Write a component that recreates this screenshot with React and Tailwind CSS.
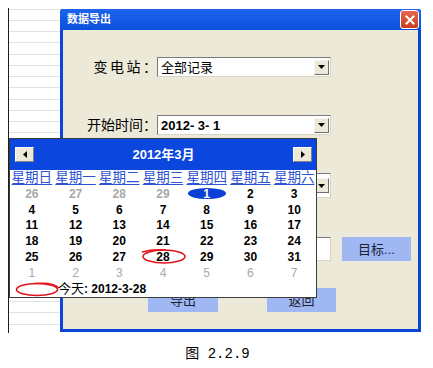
import React from "react";

function DropBtn() {
  return (
    <div className="w-[15px] h-[15px] bg-[#ece9d8] border border-t-[#f4f3ee] border-l-[#f4f3ee] border-r-[#6f6f6f] border-b-[#6f6f6f] flex items-center justify-center shrink-0">
      <svg width="7" height="4" viewBox="0 0 7 4">
        <path d="M0 0H7L3.5 4Z" fill="#000" />
      </svg>
    </div>
  );
}

function Combo({ children, tall }) {
  return (
    <div
      className={
        (tall ? "h-[25px] " : "h-[20px] ") +
        "w-[174px] bg-white border border-t-[#7a7a7a] border-l-[#7a7a7a] border-r-[#d8d5c8] border-b-[#d8d5c8] flex items-center justify-between pl-[3px] pr-[1px]"
      }
    >
      <div className="text-[13px] leading-none text-black whitespace-pre">{children}</div>
      <DropBtn />
    </div>
  );
}

function NavBtn({ dir }) {
  return (
    <div className="w-[19px] h-[15px] bg-[#ece9d8] border border-t-[#ffffff] border-l-[#ffffff] border-r-[#808080] border-b-[#808080] flex items-center justify-center">
      <svg width="4" height="7" viewBox="0 0 4 7">
        {dir === "left" ? (
          <path d="M4 0V7L0 3.5Z" fill="#000" />
        ) : (
          <path d="M0 0V7L4 3.5Z" fill="#000" />
        )}
      </svg>
    </div>
  );
}

const weeks = [
  [
    { d: 26, g: true },
    { d: 27, g: true },
    { d: 28, g: true },
    { d: 29, g: true },
    { d: 1, sel: true },
    { d: 2 },
    { d: 3 },
  ],
  [4, 5, 6, 7, 8, 9, 10].map((d) => ({ d })),
  [11, 12, 13, 14, 15, 16, 17].map((d) => ({ d })),
  [18, 19, 20, 21, 22, 23, 24].map((d) => ({ d })),
  [25, 26, 27, 28, 29, 30, 31].map((d) => ({ d })),
  [1, 2, 3, 4, 5, 6, 7].map((d) => ({ d, g: true, thin: true })),
];

const dayNames = ["星期日", "星期一", "星期二", "星期三", "星期四", "星期五", "星期六"];

function Calendar() {
  return (
    <div className="absolute left-[9px] top-[138px] w-[308px] border border-[#3c3c3c] bg-white flex flex-col">
      <div className="h-[31px] bg-[#0b46df] flex items-center justify-between pl-[5px] pr-[4px]">
        <NavBtn dir="left" />
        <div className="text-white font-bold text-[13px] leading-none">2012年3月</div>
        <NavBtn dir="right" />
      </div>
      <div className="h-[16px] grid grid-cols-7 items-center">
        {dayNames.map((n) => (
          <div key={n} className="h-[14px] text-center text-[13.5px] leading-[14px] text-[#2d52d2] underline underline-offset-[2px]">
            {n}
          </div>
        ))}
      </div>
      <div className="grid grid-cols-7">
        {weeks.map((w, i) =>
          w.map((c, j) => (
            <div key={i + "-" + j} className="h-[15.8px] relative flex items-center justify-center">
              {c.sel && <span className="absolute left-[3px] top-[2px] w-[38px] h-[11px] rounded-[50%] bg-[#0b3fd6]" />}
              <span
                className={
                  "relative text-[12px] leading-none " +
                  (c.sel
                    ? "text-white font-bold"
                    : c.g
                    ? c.thin
                      ? "text-[#a8a8a8]"
                      : "text-[#a8a8a8] font-bold"
                    : "text-black font-bold")
                }
              >
                {c.d}
              </span>
            </div>
          ))
        )}
      </div>
      <div className="h-[16px] flex items-center pl-[48px]">
        <span className="text-[13px] leading-none text-black">今天</span>
        <span className="text-[12px] leading-none font-bold text-black">: 2012-3-28</span>
      </div>
    </div>
  );
}

export default function App() {
  const lines = Array.from({ length: 29 }, (_, i) => i);
  return (
    <div className="relative w-[433px] h-[368px] bg-white overflow-hidden font-['Liberation_Sans','Noto_Sans_CJK_SC',sans-serif]">
      <div className="flex pl-[8px] pt-[8px]">
        {/* ruled sheet at left */}
        <div className="w-[52px] h-[325px] border-l border-[#1e1e1e] flex flex-col pt-[1px] overflow-hidden">
          {lines.map((i) => (
            <div
              key={i}
              className={(i % 4 === 3 ? "h-[12px]" : "h-[11px]") + " shrink-0 border-t border-[#e2e2e2]"}
            />
          ))}
        </div>
        {/* dialog window */}
        <div className="mt-[1px] w-[361px] h-[323px] flex flex-col">
          <div className="h-[21px] bg-gradient-to-b from-[#1d63ec] to-[#0a50dc] rounded-t-[2px] flex items-center justify-between pl-[7px] pr-[2px]">
            <span className="text-white font-bold text-[11px] leading-none">数据导出</span>
            <div className="w-[19px] h-[19px] rounded-[3px] border border-white bg-gradient-to-b from-[#e8674a] to-[#c83d1e] flex items-center justify-center">
              <svg width="10" height="10" viewBox="0 0 10 10">
                <path d="M1.5 1.5L8.5 8.5M8.5 1.5L1.5 8.5" stroke="#fff" strokeWidth="2" strokeLinecap="square" />
              </svg>
            </div>
          </div>
          <div className="flex-1 bg-[#ece9d8] border-l-[3px] border-r-[3px] border-b-[3px] border-[#0a45d8] flex flex-col">
            <div className="mt-[27px] flex items-center h-[20px]">
              <div className="w-[94px] text-right text-[14px] leading-none text-black">
                <span className="tracking-[2.5px]">变电站</span>：
              </div>
              <Combo>全部记录</Combo>
            </div>
            <div className="mt-[38px] flex items-center h-[20px]">
              <div className="w-[94px] text-right text-[14px] leading-none text-black">开始时间：</div>
              <Combo>
                <span className="font-bold">2012- 3- 1</span>
              </Combo>
            </div>
            {/* end-date combo, mostly hidden under the calendar popup */}
            <div className="mt-[38px] flex items-center h-[25px]">
              <div className="w-[94px]" />
              <Combo tall />
            </div>
            <div className="mt-[39px] flex items-center h-[24px]">
              <div className="ml-[95px] w-[173px] h-[24px] bg-white border border-t-[#7a7a7a] border-l-[#7a7a7a] border-r-[#d8d5c8] border-b-[#d8d5c8]" />
              <div className="ml-[11px] w-[69px] h-[24px] bg-[#9fb7f3] flex items-center justify-center text-[13px] leading-none text-[#1c2233]">
                目标...
              </div>
            </div>
            <div className="mt-[27px] flex items-center h-[24px]">
              <div className="ml-[85px] w-[70px] h-[24px] bg-[#9fb7f3] flex items-center justify-center text-[13px] leading-none text-[#1c2233]">
                导出
              </div>
              <div className="ml-[49px] w-[69px] h-[24px] bg-[#9fb7f3] flex items-center justify-center text-[13px] leading-none text-[#1c2233]">
                返回
              </div>
            </div>
          </div>
        </div>
      </div>
      <div className="mt-[14px] flex justify-center pl-[2px]">
        <span className="text-[14px] leading-none text-black font-['Liberation_Mono','Noto_Sans_CJK_SC',monospace]">图 2.2.9</span>
      </div>

      <Calendar />

      {/* hand-drawn red marks */}
      <svg className="absolute left-[138px] top-[246px]" width="52" height="22" viewBox="0 0 52 22">
        <ellipse cx="26" cy="10.5" rx="21" ry="6.5" fill="none" stroke="#e3141b" strokeWidth="1.6" />
        <path d="M4 6 Q 14 3 28 4" fill="none" stroke="#e3141b" strokeWidth="1.4" />
      </svg>
      <svg className="absolute left-[13px] top-[279px]" width="52" height="22" viewBox="0 0 52 22">
        <ellipse cx="24" cy="10.5" rx="20.5" ry="6" fill="none" stroke="#e3141b" strokeWidth="1.6" />
        <path d="M22 4.5 Q 40 3 46 9" fill="none" stroke="#e3141b" strokeWidth="1.4" />
      </svg>
    </div>
  );
}
